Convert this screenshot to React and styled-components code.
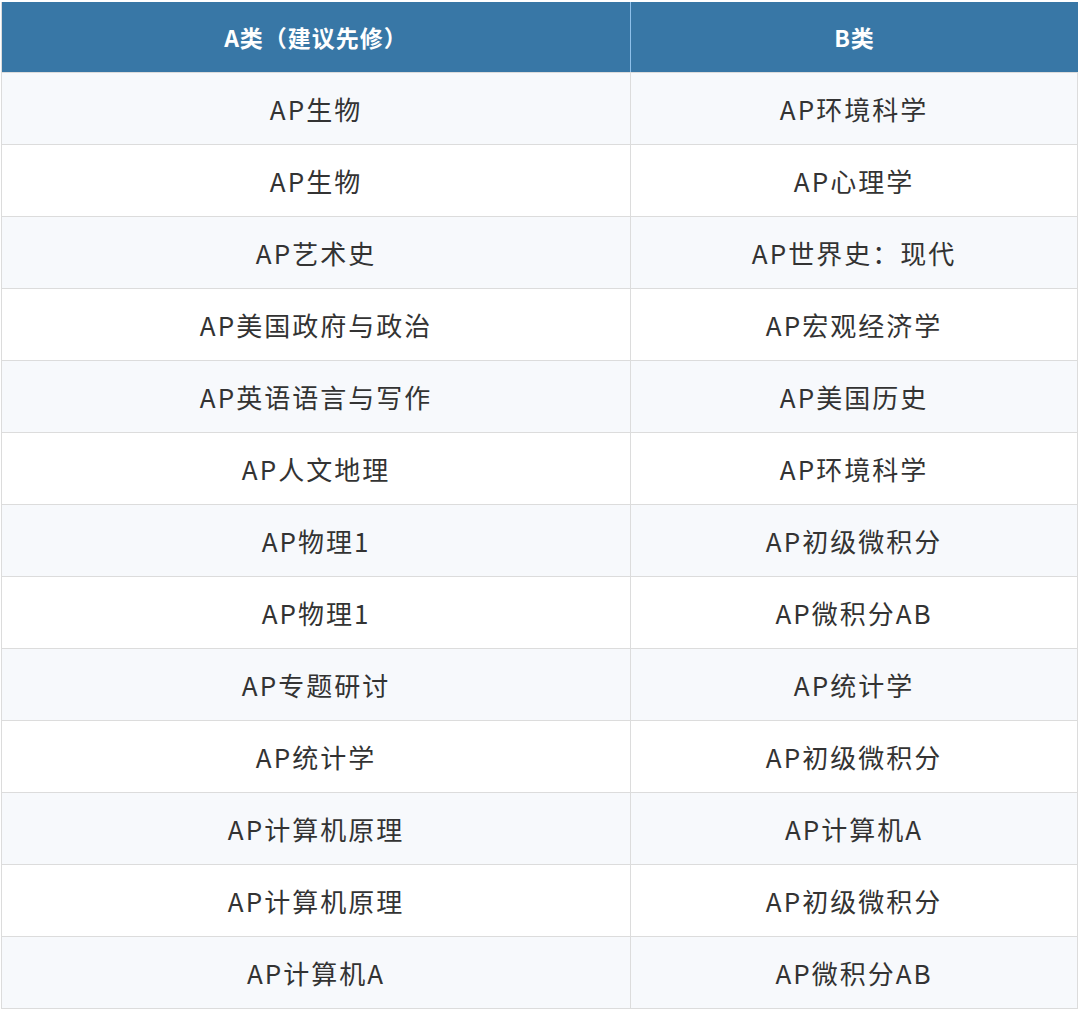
import React from "react";
import styled, { createGlobalStyle } from "styled-components";

const G = createGlobalStyle`
  body { margin: 0; background: #fff; font-family: "Noto Sans CJK SC", "Noto Sans", sans-serif; }
`;
const Wrap = styled.div`padding: 2px 2px 0 1px;`;
const Table = styled.div`
  display: grid;
  grid-template-columns: 629px 1fr;
  border-left: 1px solid #dcdcdc;
  border-bottom: 1px solid #dcdcdc;
`;
const Head = styled.div`
  height: 70px; background: #3877a6; color: #fff; font-weight: 700; font-size: 23px;
  display: flex; align-items: center; justify-content: center; letter-spacing: 1px;
  border-right: 1px solid #8fc0ea;
  &:nth-child(2) { border-right: none; }
`;
const Cell = styled.div`
  height: 71px; background: ${p => (p.$alt ? "#f7f9fc" : "#fff")};
  border-top: 1px solid #dcdcdc; border-right: 1px solid #dcdcdc;
  display: flex; align-items: center; justify-content: center;
  font-size: 26px; color: #333; letter-spacing: 2px;
`;
const rows = [
  ["AP生物","AP环境科学"],["AP生物","AP心理学"],["AP艺术史","AP世界史：现代"],
  ["AP美国政府与政治","AP宏观经济学"],["AP英语语言与写作","AP美国历史"],["AP人文地理","AP环境科学"],
  ["AP物理1","AP初级微积分"],["AP物理1","AP微积分AB"],["AP专题研讨","AP统计学"],
  ["AP统计学","AP初级微积分"],["AP计算机原理","AP计算机A"],["AP计算机原理","AP初级微积分"],
  ["AP计算机A","AP微积分AB"],
];
export default function App() {
  return (
    <Wrap>
      <G />
      <Table>
        <Head>A类（建议先修）</Head>
        <Head>B类</Head>
        {rows.map((r, i) => (
          <React.Fragment key={i}>
            <Cell $alt={i % 2 === 0}>{r[0]}</Cell>
            <Cell $alt={i % 2 === 0}>{r[1]}</Cell>
          </React.Fragment>
        ))}
      </Table>
    </Wrap>
  );
}
